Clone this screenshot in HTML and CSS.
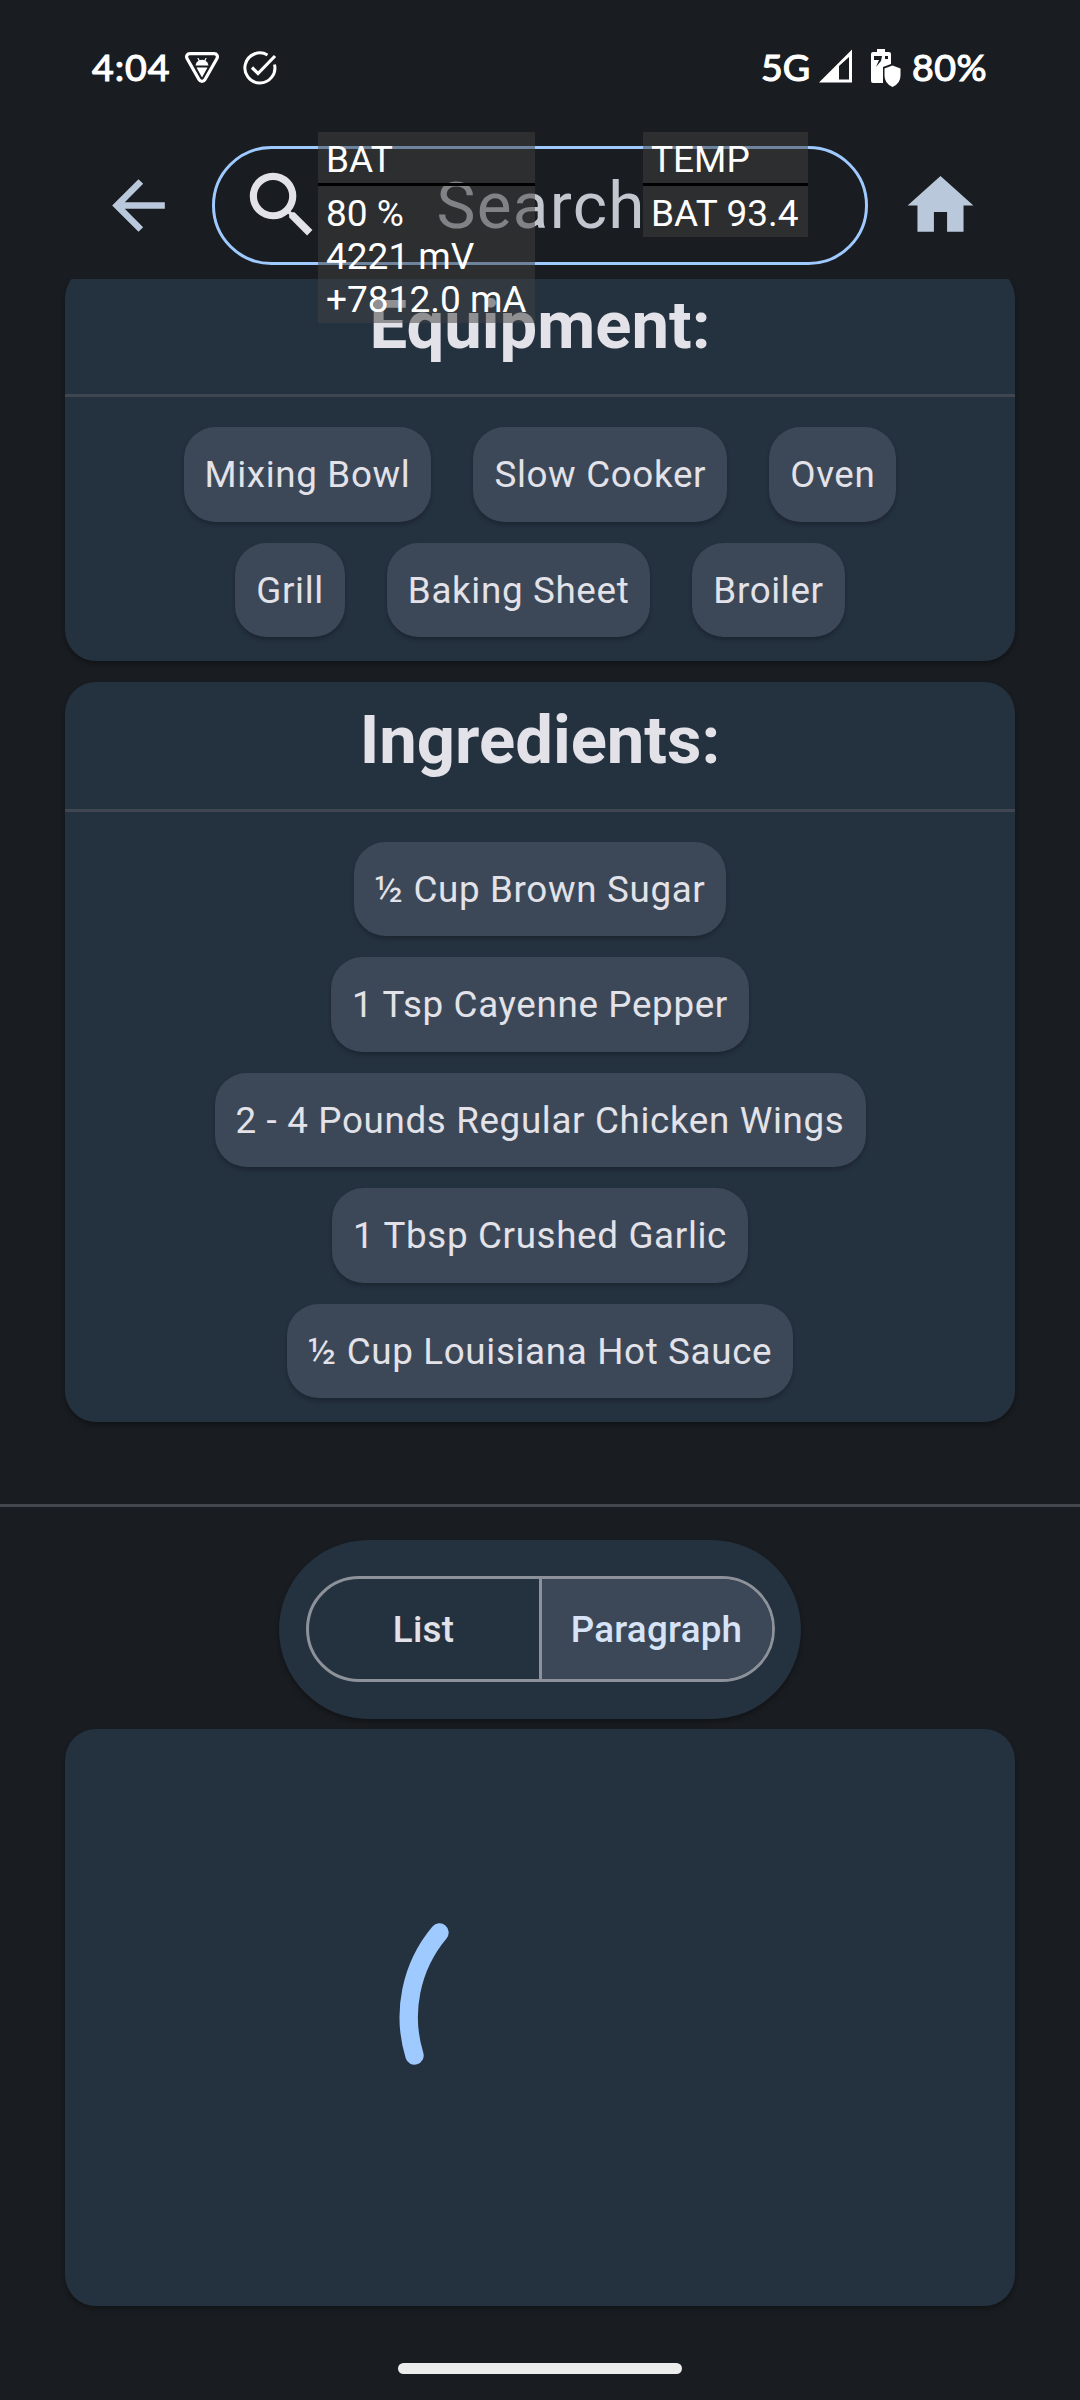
FILE: index.html
```html
<!DOCTYPE html>
<html lang="en">
<head>
<meta charset="utf-8">
<title>Recipe</title>
<link rel="stylesheet" href="styles.css">
</head>
<body>
<div class="screen">
  <div class="status">
    <div class="status-left">
      <span class="clock">4:04</span>
      <svg class="ic-bug" viewBox="0 0 34 32"><path d="M5 1.7h24c3 0 4.200 2.500 2.800 5L20 27.500c-1.400 2.600-4.600 2.600-6 0L2.200 6.700C.8 4.200 2 1.700 5 1.700z" fill="none" stroke="#fff" stroke-width="3.200"/><path d="M10.500 13.500q.5-3.500 3-4.800L12.300 6h1.200l1.200 2.200q2.300-.8 4.600 0L20.500 6h1.200l-1.200 2.700q2.500 1.300 3 4.800zM11.500 15.500h11L17 25.500z" fill="#fff"/></svg>
      <svg class="ic-check" viewBox="0 0 34 34"><path d="M24.500 4A15 15 0 1 0 31.500 13.500" fill="none" stroke="#fff" stroke-width="3"/><path d="M9 16.500l6 6L32 5" fill="none" stroke="#fff" stroke-width="3.200"/></svg>
    </div>
    <div class="status-right">
      <span class="net">5G</span>
      <svg class="ic-signal" viewBox="0 0 34 34"><path fill-rule="evenodd" d="M0 33.500L33 .5v33zM20 17v13.500h10V8z" fill="#fff"/></svg>
      <svg class="ic-batt" viewBox="0 0 32 40"><path fill-rule="evenodd" d="M7 1h8v3h4q2 0 2 2v10l-8 3v16H3q-2 0-2-2V6q0-2 2-2h4zM4 8v4h5l-3 7 5-6 1-5zM15 8v3h3V8z" fill="#fff"/><path d="M22.500 17.500l8 3v7q0 8-8 11.500-8-3.500-8-11.500v-7z" fill="#fff"/></svg>
      <span class="pct">80%</span>
    </div>
  </div>

  <header class="topbar">
    <svg class="nav" viewBox="0 0 24 24"><path d="M20 11H7.830l5.590-5.590L12 4l-8 8 8 8 1.410-1.410L7.830 13H20z"/></svg>
    <div class="search">
      <svg class="lens" viewBox="0 0 24 24"><path d="M15.500 14h-.79l-.28-.27A6.470 6.470 0 0 0 16 9.500 6.500 6.500 0 1 0 9.500 16c1.610 0 3.090-.59 4.230-1.570l.27.28v.79l5 4.990L20.490 19zm-6 0a4.500 4.500 0 1 1 0-9 4.500 4.500 0 0 1 0 9z"/></svg>
      <span class="placeholder">Search</span>
    </div>
    <svg class="nav" viewBox="0 0 24 24"><path d="M10 20v-6h4v6h5v-8h3L12 3 2 12h3v8z"/></svg>
  </header>

  <main class="content">
    <section class="card card-first">
      <h2>Equipment:</h2>
      <div class="chips">
        <span class="chip">Mixing Bowl</span><span class="chip">Slow Cooker</span><span class="chip">Oven</span>
        <span class="chip">Grill</span><span class="chip">Baking Sheet</span><span class="chip">Broiler</span>
      </div>
    </section>
    <section class="card">
      <h2>Ingredients:</h2>
      <div class="chips chips-col">
        <span class="chip">½ Cup Brown Sugar</span>
        <span class="chip">1 Tsp Cayenne Pepper</span>
        <span class="chip">2 - 4 Pounds Regular Chicken Wings</span>
        <span class="chip">1 Tbsp Crushed Garlic</span>
        <span class="chip">½ Cup Louisiana Hot Sauce</span>
      </div>
    </section>
    <hr class="rule">
    <div class="toggle-wrap">
      <div class="toggle">
        <span class="seg">List</span>
        <span class="seg seg-on">Paragraph</span>
      </div>
    </div>
    <section class="card loading">
      <svg class="spinner" viewBox="0 0 282 282"><path d="M40.500 56.500A131.300 131.300 0 0 0 15.500 179.500"/></svg>
    </section>
  </main>
  <div class="home-pill"></div>

  <div class="overlay overlay-bat">
    <div class="ov-head">BAT</div>
    <div class="ov-body">80 %<br>4221 mV<br>+7812.0 mA</div>
  </div>
  <div class="overlay overlay-temp">
    <div class="ov-head">TEMP</div>
    <div class="ov-body">BAT 93.4</div>
  </div>
</div>
</body>
</html>
```
FILE: styles.css
```css
* { box-sizing: border-box; }
body { margin: 0; background: #191c20; font-family: Roboto, "Liberation Sans", sans-serif; color: #e2e2e8; }
svg { display: block; flex: none; }
.screen { position: relative; width: 1080px; height: 2400px; overflow: hidden; display: flex; flex-direction: column; align-items: center; }

.status { width: 100%; height: 132px; padding: 0 93px 0 92px; display: flex; justify-content: space-between; color: #fff; font-family: Lato, Roboto, sans-serif; font-size: 37.500px; font-weight: 400; -webkit-text-stroke: 1.200px #fff; line-height: 44px; }
.status-left, .status-right { display: flex; padding-top: 45px; align-items: flex-start; }
.clock { width: 92px; letter-spacing: 1px; }
.ic-bug { width: 34px; height: 32px; margin: 7px 0 0 1px; }
.ic-check { width: 34px; height: 34px; margin: 6px 0 0 24px; }
.net { width: 58px; }
.ic-signal { width: 34px; height: 34px; margin-top: 4px; }
.ic-batt { width: 32px; height: 40px; margin: 3px 0 0 17px; }
.pct { width: 85px; text-align: right; letter-spacing: .5px; }

.topbar { width: 100%; height: 147px; padding: 14px 100px 0 99px; display: flex; justify-content: space-between; align-items: flex-start; }
.nav { width: 79px; height: 79px; margin-top: 20px; fill: #b9c8da; }
.search { width: 656px; height: 119px; border: 3px solid #9ecaff; border-radius: 60px; display: flex; align-items: center; padding-left: 24px; }
.lens { width: 86px; height: 86px; margin-top: -1px; fill: #e2e2e8; }
.placeholder { margin-left: 112px; font-size: 65.6px; color: #c3c6cf; letter-spacing: 1.3px; line-height: 80px; }

.content { width: 100%; height: 2065px; overflow: hidden; display: flex; flex-direction: column; align-items: center; flex: none; }
.card { width: 950px; background: #24313f; border-radius: 31px; margin-bottom: 21px; box-shadow: 0 3px 5px rgba(0,0,0,.3); flex: none; }
.card-first { margin-top: -12px; }
.card h2 { margin: 0; height: 130px; border-bottom: 3px solid #3f464f; font-size: 67px; font-weight: 700; line-height: 117px; text-align: center; }
.chips { display: flex; flex-wrap: wrap; justify-content: center; gap: 21px 42px; padding: 30px 50px 23.500px; }
.chips-col { flex-direction: column; align-items: center; }
.chip { height: 94.500px; padding: 0 21px; border-radius: 31.500px; background: #3c4858; font-size: 36.750px; letter-spacing: .660px; line-height: 96px; white-space: nowrap; box-shadow: 0 3px 4px rgba(0,0,0,.22); }

.rule { width: 100%; margin: 61px 0 33px; height: 3px; border: 0; background: #43474e; flex: none; }
.toggle-wrap { width: 522px; height: 179px; border-radius: 90px; background: #24313f; display: flex; align-items: center; justify-content: center; margin-bottom: 10px; box-shadow: 0 3px 5px rgba(0,0,0,.3); flex: none; }
.toggle { width: 469px; height: 106px; border: 3px solid #8d9199; border-radius: 53px; overflow: hidden; display: flex; }
.seg { flex: 1 1 0; display: flex; align-items: center; justify-content: center; font-size: 36.750px; font-weight: 500; letter-spacing: .26px; }
.seg-on { background: #3c4858; color: #d7e3f7; border-left: 3px solid #8d9199; }
.loading { height: 577px; display: flex; align-items: center; justify-content: center; margin-bottom: 0; }
.spinner { width: 282px; height: 282px; fill: none; stroke: #9ecaff; stroke-width: 18.400; stroke-linecap: round; }
.home-pill { width: 284px; height: 11px; border-radius: 6px; background: #ececec; margin-top: 19px; flex: none; }

/* System monitor panels floating over the app */
.overlay { position: absolute; top: 132px; background: rgba(65,65,65,.51); color: #fff; font-size: 37px; line-height: 43px; white-space: nowrap; }
.overlay-bat { left: 318px; width: 217px; height: 191px; }
.overlay-temp { left: 643px; width: 165px; height: 105px; }
.ov-head { height: 54px; padding: 6px 8px 0; border-bottom: 3px solid #000; }
.ov-body { padding: 6px 8px 0; }
```
